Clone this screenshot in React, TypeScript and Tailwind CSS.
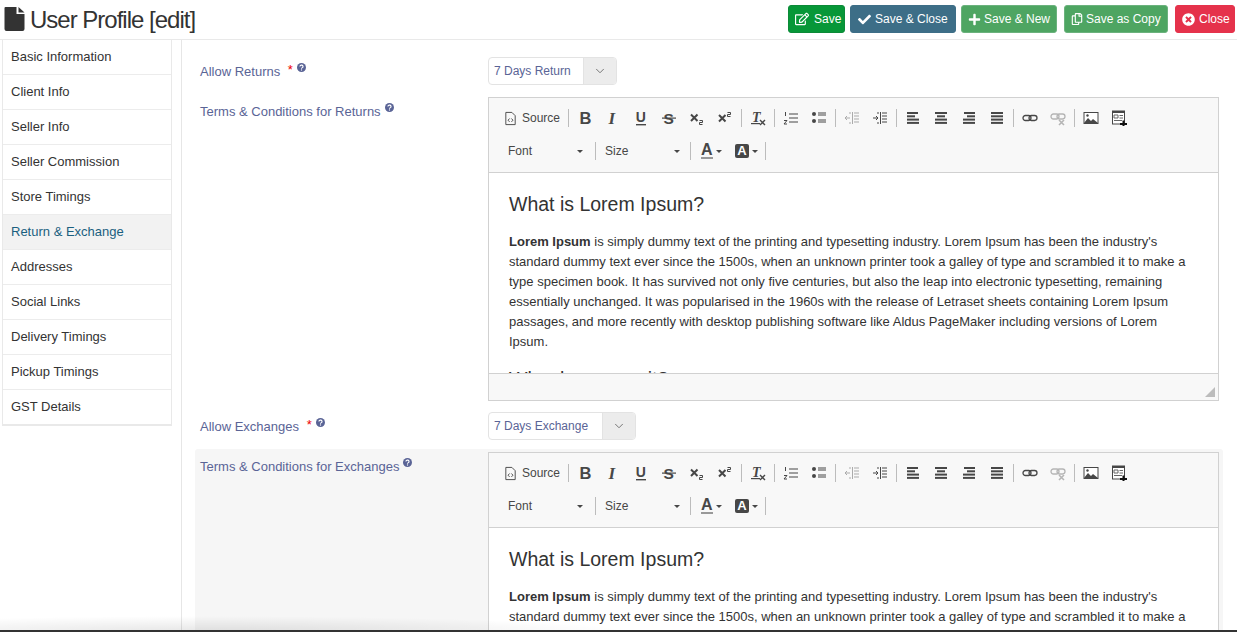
import { ChevronDown } from "lucide-react";
import { FaCheck, FaPlus, FaRegCopy, FaRegEdit, FaTimesCircle } from "react-icons/fa";

const menuItems = [
  "Basic Information",
  "Client Info",
  "Seller Info",
  "Seller Commission",
  "Store Timings",
  "Return & Exchange",
  "Addresses",
  "Social Links",
  "Delivery Timings",
  "Pickup Timings",
  "GST Details",
];

const ipsum =
  " is simply dummy text of the printing and typesetting industry. Lorem Ipsum has been the industry's standard dummy text ever since the 1500s, when an unknown printer took a galley of type and scrambled it to make a type specimen book. It has survived not only five centuries, but also the leap into electronic typesetting, remaining essentially unchanged. It was popularised in the 1960s with the release of Letraset sheets containing Lorem Ipsum passages, and more recently with desktop publishing software like Aldus PageMaker including versions of Lorem Ipsum.";

function Help() {
  return (
    <svg viewBox="0 0 16 16" className="inline-block w-[9px] h-[9px] ml-[4px] relative top-[-5px]">
      <circle cx="8" cy="8" r="8" fill="#5a6496" />
      <path d="M5.2 6.2a2.8 2.4 0 1 1 4.2 2c-1 .6-1.4 1-1.4 1.9" stroke="#fff" strokeWidth="2" fill="none" />
      <rect x="7" y="11.4" width="2" height="2" fill="#fff" />
    </svg>
  );
}

function Sep() {
  return <span className="w-px h-[18px] bg-[#bcbcbc] mx-[2px] shrink-0" />;
}

function Ic({ children }: { children: React.ReactNode }) {
  return (
    <span className="flex items-center justify-center h-[18px] w-[28px] shrink-0">
      <svg viewBox="0 0 16 16" className="w-4 h-4" fill="none">
        {children}
      </svg>
    </span>
  );
}

function Lines({ rows }: { rows: number[][] }) {
  return (
    <>
      {rows.map((r, i) => (
        <rect key={i} x={r[0]} y={2 + i * 3.3} width={r[1]} height="2" fill="#474747" />
      ))}
    </>
  );
}

function Caret() {
  return <span className="border-x-[3px] border-x-transparent border-t-[3px] border-t-[#474747]" />;
}

function Toolbar() {
  return (
    <div className="bg-[#f8f8f8] border-b border-[#d1d1d1] h-[75px] pl-[13px] pt-[11px] text-[#474747]">
      <div className="flex items-center h-[18px]">
        <svg viewBox="0 0 16 16" className="w-[15px] h-[15px] mr-[2px] ml-[1px]" fill="none" stroke="#474747">
          <path d="M3 1.5h6.5L13 5v9.5H3z" />
          <path d="M7 8l-1.6 1.8L7 11.6M9 8l1.6 1.8L9 11.6" />
        </svg>
        <span className="text-[12px] ml-[2px] mr-[6px]">Source</span>
        <Sep />
        <Ic><text x="2.5" y="14" fontSize="16.5" fontWeight="700" fill="#474747" fontFamily="Liberation Sans">B</text></Ic>
        <Ic><text x="3.5" y="14" fontSize="17" fontWeight="700" fontStyle="italic" fill="#474747" fontFamily="Liberation Serif">I</text></Ic>
        <Ic><text x="2.8" y="12" fontSize="14" fontWeight="700" fill="#474747" fontFamily="Liberation Sans">U</text><rect x="3" y="14" width="10" height="1.4" fill="#474747" /></Ic>
        <Ic><text x="2.5" y="13.5" fontSize="15.5" fontWeight="700" fill="#474747" fontFamily="Liberation Sans">S</text><rect x="1" y="7.5" width="14" height="1.2" fill="#474747" /></Ic>
        <Ic><path d="M2 4.5l6.5 6.5M8.5 4.5L2 11" stroke="#474747" strokeWidth="2" /><path d="M10.5 10.5h3v2h-3v2h3" stroke="#474747" /></Ic>
        <Ic><path d="M2 5l6.5 6.5M8.5 5L2 11.5" stroke="#474747" strokeWidth="2" /><path d="M10.5 2.5h3v2h-3v2h3" stroke="#474747" /></Ic>
        <Sep />
        <Ic><text x="2" y="11.5" fontSize="14" fontWeight="700" fontStyle="italic" fill="#474747" fontFamily="Liberation Serif">T</text><rect x="1" y="13" width="9" height="1.2" fill="#474747" /><path d="M10 10l5 5M15 10l-5 5" stroke="#474747" strokeWidth="1.4" /></Ic>
        <Sep />
        <Ic><path d="M6 4h9M6 8h9M6 12h9" stroke="#474747" /><path d="M2.5 2v4M1 10.5h3L1 14h3" stroke="#474747" /></Ic>
        <Ic><circle cx="3" cy="4" r="2" fill="#474747" /><circle cx="3" cy="11" r="2" fill="#474747" /><path d="M7 3h8M7 5h8M7 10h8M7 12h8" stroke="#474747" /></Ic>
        <Sep />
        <Ic><path d="M8.5 2v12" stroke="#ababab" /><path d="M10 3h5M10 6h5M10 9h5M10 12h5M1 8h5M3 6L1 8l2 2M5 3h2M5 13h2" stroke="#ababab" /></Ic>
        <Ic><path d="M8.5 2v12" stroke="#474747" /><path d="M10 3h5M10 6h5M10 9h5M10 12h5M1 8h5M4 6l2 2-2 2M5 3h2M5 13h2" stroke="#474747" /></Ic>
        <Sep />
        <Ic><Lines rows={[[2, 11], [2, 8], [2, 12], [2, 12]]} /></Ic>
        <Ic><Lines rows={[[2, 12], [4, 8], [2, 12], [2, 12]]} /></Ic>
        <Ic><Lines rows={[[3, 11], [6, 8], [2, 12], [2, 12]]} /></Ic>
        <Ic><Lines rows={[[2, 12], [2, 12], [2, 12], [2, 12]]} /></Ic>
        <Sep />
        <Ic><rect x="1" y="5.5" width="8" height="5" rx="2.4" stroke="#474747" strokeWidth="1.3" /><rect x="7" y="5.5" width="8" height="5" rx="2.4" stroke="#474747" strokeWidth="1.3" /></Ic>
        <Ic><rect x="1" y="4" width="8" height="5" rx="2.4" stroke="#b5b5b5" strokeWidth="1.3" /><rect x="7" y="4" width="8" height="5" rx="2.4" stroke="#b5b5b5" strokeWidth="1.3" /><path d="M9 10l5 5M14 10l-5 5" stroke="#b5b5b5" strokeWidth="1.6" /></Ic>
        <Sep />
        <Ic><rect x="1" y="2.5" width="14" height="11" fill="#fff" stroke="#474747" /><path d="M1 13l4-5 3 3 2-2 5 4v1H1z" fill="#474747" /><circle cx="4.5" cy="5.5" r="1.2" fill="#474747" /></Ic>
        <Ic><rect x="1.5" y="1" width="12" height="13" fill="#fff" stroke="#474747" /><rect x="1.5" y="1" width="12" height="2" fill="#474747" /><path d="M3 5h4v3H3zM8.5 5.5h3.5M8.5 8h3.5M3 10.5h8" stroke="#666" /><path d="M9 14h7M12.5 10.5v5.5" stroke="#111" strokeWidth="2" /></Ic>
      </div>
      <div className="flex items-center h-[18px] mt-[15px]">
        <span className="w-[91px] flex items-center justify-between text-[12px] pl-[6px] pr-[10px]">
          Font
          <Caret />
        </span>
        <Sep />
        <span className="w-[90px] flex items-center justify-between text-[12px] pl-[7px] pr-[8px]">
          Size
          <Caret />
        </span>
        <Sep />
        <span className="w-[35px] flex items-center gap-[3px] pl-[8px]">
          <span className="text-[16px] leading-[14px] font-bold border-b-2 border-[#999]">A</span>
          <Caret />
        </span>
        <span className="w-[35px] flex items-center gap-[3px] pl-[7px]">
          <span className="text-[13px] leading-[14px] font-bold bg-[#474747] text-white rounded-[2px] w-[14px] h-[14px] text-center">A</span>
          <Caret />
        </span>
        <Sep />
      </div>
    </div>
  );
}

function Editor() {
  return (
    <div className="border border-[#d1d1d1] bg-white">
      <Toolbar />
      <div className="h-[200px] overflow-hidden px-[20px] pt-[19px] text-[#333]">
        <h1 className="text-[19.5px] leading-[24px] mb-[16px]">What is Lorem Ipsum?</h1>
        <p className="text-[13px] leading-[20px]">
          <strong>Lorem Ipsum</strong>
          {ipsum}
        </p>
        <h2 className="text-[19.5px] leading-[24px] mt-[15px]">Why do we use it?</h2>
      </div>
      <div className="h-[27px] bg-[#f8f8f8] border-t border-[#d1d1d1] relative">
        <span className="absolute right-[3px] bottom-[3px] w-0 h-0 border-l-[10px] border-l-transparent border-b-[10px] border-b-[#bcbcbc]" />
      </div>
    </div>
  );
}

function Sel({ text, w }: { text: string; w: number }) {
  return (
    <div className="flex h-[28px] border border-[#e3e3e3] rounded-[4px] overflow-hidden text-[12px] text-[#5a6496]" style={{ width: w }}>
      <span className="flex-1 flex items-center pl-[5px]">{text}</span>
      <span className="w-[33px] bg-[#ececec] flex items-center justify-center border-l border-[#e3e3e3]">
        <ChevronDown size={14} strokeWidth={1.5} color="#666" />
      </span>
    </div>
  );
}

const btn = "h-[28px] rounded-[3px] flex items-center text-white text-[12px] font-medium border";

export default function App() {
  return (
    <div className="w-[1237px] h-[632px] overflow-hidden bg-white relative font-['Liberation_Sans',Arial,sans-serif]">
      <header className="h-[40px] flex items-center border-b border-[#e9e9e9]">
        <svg viewBox="0 0 20 24" className="w-[21px] h-[24px] ml-[4px] mb-[1px]">
          <path d="M1 0h11v7h8v15a2 2 0 0 1-2 2H2a2 2 0 0 1-2-2V1a1 1 0 0 1 1-1z" fill="#333" />
          <path d="M14 0l6 5.4h-6z" fill="#333" />
        </svg>
        <span className="text-[24px] leading-none ml-[5px] text-[#333] tracking-[-1px]">User Profile [edit]</span>
        <div className="ml-auto flex items-center pr-[2px] mb-[1px]">
          <button className={`${btn} w-[57px] bg-[#079738] border-[#0c8a38] pl-[6px] gap-[5px]`}>
            <FaRegEdit size={14} />Save
          </button>
          <button className={`${btn} ml-[5px] w-[106px] bg-[#3d6e87] border-[#3d6e87] pl-[7px] gap-[4px]`}>
            <FaCheck size={13} />Save &amp; Close
          </button>
          <button className={`${btn} ml-[5px] w-[96px] bg-[#4ea562] border-[#6bb27d] pl-[6px] gap-[3px]`}>
            <FaPlus size={13} />Save &amp; New
          </button>
          <button className={`${btn} ml-[7px] w-[104px] bg-[#4ea562] border-[#6bb27d] pl-[6px] gap-[3px]`}>
            <FaRegCopy size={12} />Save as Copy
          </button>
          <button className={`${btn} ml-[7px] w-[60px] bg-[#e5324b] border-[#e5324b] pl-[6px] gap-[4px]`}>
            <FaTimesCircle size={13} />Close
          </button>
        </div>
      </header>
      <div className="flex items-start">
        <nav className="w-[170px] ml-[2px] mt-[-1px] border border-[#e9e9e9] border-b-2 text-[13px] text-[#333]">
          {menuItems.map((m, i) => (
            <div
              key={m}
              className={`flex items-center pl-[8px] ${i ? "h-[35px] border-t border-[#ececec]" : "h-[34px] pb-[1px]"} ${m === "Return & Exchange" ? "bg-[#f2f2f2] text-[#1a5f7f]" : ""}`}
            >
              {m}
            </div>
          ))}
        </nav>
        <main className="ml-[9px] flex-1 h-[592px] border-l border-[#e6e6e6] pl-[13px] text-[13px] text-[#5a6496]">
          <div className="flex pt-[17px] pl-[5px] h-[57px]">
            <label className="w-[288px] pt-[5px]">
              Allow Returns <span className="text-[#e00] ml-[4px] relative top-[-2px]">*</span>
              <Help />
            </label>
            <Sel text="7 Days Return" w={129} />
          </div>
          <div className="flex pl-[5px]">
            <label className="w-[288px] pt-[5px] shrink-0">
              Terms &amp; Conditions for Returns
              <Help />
            </label>
            <div className="w-[731px]">
              <Editor />
            </div>
          </div>
          <div className="flex pt-[11px] pl-[5px] h-[48px]">
            <label className="w-[288px] pt-[5px]">
              Allow Exchanges <span className="text-[#e00] ml-[4px] relative top-[-2px]">*</span>
              <Help />
            </label>
            <Sel text="7 Days Exchange" w={148} />
          </div>
          <div className="flex pl-[5px] pt-[3px] bg-[#f6f6f6] rounded-[3px] h-[300px] mr-[14px]">
            <label className="w-[288px] pt-[5px] shrink-0">
              Terms &amp; Conditions for Exchanges
              <Help />
            </label>
            <div className="w-[731px]">
              <Editor />
            </div>
          </div>
        </main>
      </div>
      <div className="absolute left-[-210px] w-[840px] bottom-0 h-[16px] bg-[radial-gradient(ellipse_farthest-side_at_bottom,#0000001a,transparent)]" />
      <div className="absolute left-0 right-0 bottom-0 h-[2px] bg-[#333]" />
    </div>
  );
}
